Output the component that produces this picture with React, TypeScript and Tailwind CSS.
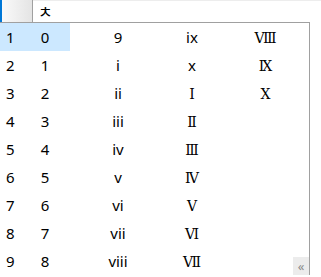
import React from 'react';

const columns: string[][] = [
    ['0', '1', '2', '3', '4', '5', '6', '7', '8'],
    ['9', 'i', 'ii', 'iii', 'iv', 'v', 'vi', 'vii', 'viii'],
    ['ix', 'x', 'Ⅰ', 'Ⅱ', 'Ⅲ', 'Ⅳ', 'Ⅴ', 'Ⅵ', 'Ⅶ'],
    ['Ⅷ', 'Ⅸ', 'Ⅹ', '', '', '', '', '', ''],
];

// upper-case roman numeral glyphs render in a serif face in the IME
const isRoman = (s: string) => /[\u2160-\u216f]/.test(s);

function Cell({ text, className }: { text: string; className: string }) {
    return (
        <div className={className}>
            <span className={isRoman(text) ? "font-['DejaVu_Serif','Liberation_Serif',serif] text-[14px]" : ''}>{text}</span>
        </div>
    );
}

export default function App() {
    return (
        <div className="relative w-[321px] h-[277px] overflow-hidden bg-white text-black font-['Noto_Sans','Noto_Sans_CJK_KR',sans-serif]">
            {/* composition bar */}
            <div className="flex h-[22px]">
                <div className="w-[2px] bg-[#0078d7]" />
                <div className="w-[31px] bg-gradient-to-r from-[#fafafa] to-[#e4e4e4] border-r border-[#a0a0a0]" />
                <div className="flex-1 border-t border-[#ededed] pl-[5px] text-[16px] leading-[20px] font-['Noto_Sans_CJK_KR',sans-serif]">
                    ㅊ
                </div>
            </div>

            {/* candidate list */}
            <div className="w-[310px] border-t border-r border-[#a0a0a0] text-[15px]">
                {columns[0].map((_, r) => (
                    <div key={r} className="flex h-[28px] items-center">
                        <div className={'flex w-[70px] h-full items-center ' + (r === 0 ? 'bg-[#cce8ff]' : '')}>
                            <span className="w-[20px] pl-[6px]">{r + 1}</span>
                            <span className="flex-1 text-center">{columns[0][r]}</span>
                        </div>
                        <Cell text={columns[1][r]} className="ml-[11px] w-[74px] text-center" />
                        <Cell text={columns[2][r]} className="w-[74px] text-center" />
                        <Cell text={columns[3][r]} className="w-[73px] text-center" />
                    </div>
                ))}
            </div>

            <div className="absolute left-[293px] top-[257px] w-[16px] h-[18px] bg-[#ececec] flex items-center justify-center text-[13px] text-[#8a8a8a] leading-none">
                «
            </div>
        </div>
    );
}
